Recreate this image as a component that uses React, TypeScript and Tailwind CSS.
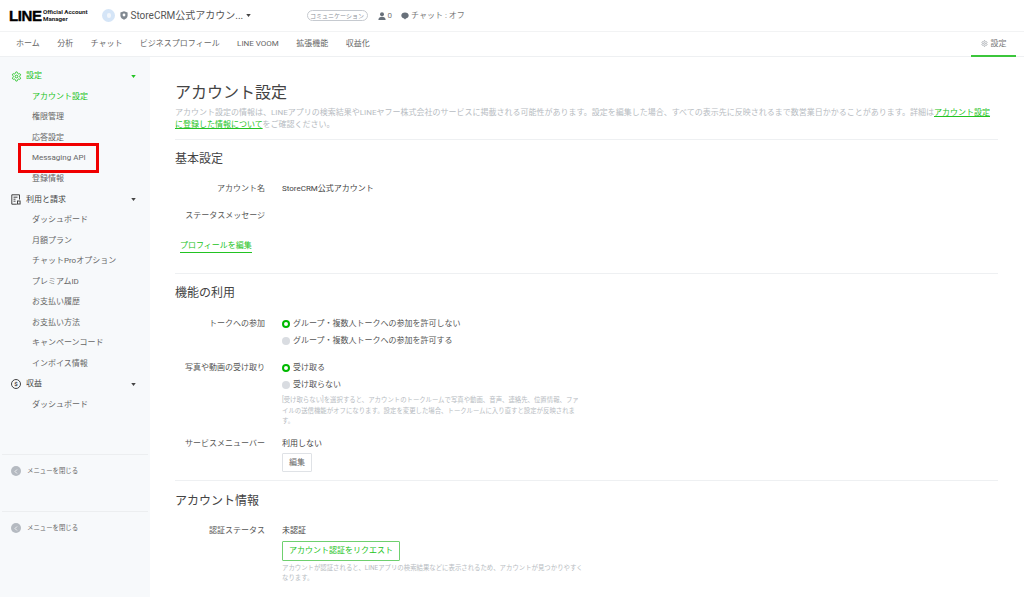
import React from "react";

const FONT = "[font-family:Roboto,'Noto_Sans_CJK_JP',sans-serif]";
const Caret = ({ green = false }: { green?: boolean }) => (
  <svg width="5" height="3" viewBox="0 0 6 4" className={green ? "text-[#22c322]" : "text-[#444]"}>
    <path d="M0 0h6L3 4z" fill="currentColor" />
  </svg>
);

const Gear = ({ className = "", size = 11 }: { className?: string; size?: number }) => (
  <svg width={size} height={size} viewBox="0 0 24 24" fill="none" stroke="currentColor" strokeWidth="2" className={className}>
    <path d="M12.2 2h-.4a2 2 0 0 0-2 2v.2a2 2 0 0 1-1 1.7l-.4.3a2 2 0 0 1-2 0l-.2-.1a2 2 0 0 0-2.7.7l-.2.4a2 2 0 0 0 .7 2.7l.2.1a2 2 0 0 1 1 1.7v.5a2 2 0 0 1-1 1.8l-.2.1a2 2 0 0 0-.7 2.7l.2.4a2 2 0 0 0 2.7.7l.2-.1a2 2 0 0 1 2 0l.4.3a2 2 0 0 1 1 1.7v.2a2 2 0 0 0 2 2h.4a2 2 0 0 0 2-2v-.2a2 2 0 0 1 1-1.7l.4-.3a2 2 0 0 1 2 0l.2.1a2 2 0 0 0 2.7-.7l.2-.4a2 2 0 0 0-.7-2.7l-.2-.1a2 2 0 0 1-1-1.8v-.5a2 2 0 0 1 1-1.7l.2-.1a2 2 0 0 0 .7-2.7l-.2-.4a2 2 0 0 0-2.7-.7l-.2.1a2 2 0 0 1-2 0l-.4-.3a2 2 0 0 1-1-1.7V4a2 2 0 0 0-2-2z" />
    <circle cx="12" cy="12" r="3" />
  </svg>
);

const SideHead = ({ icon, label, green = false }: { icon: React.ReactNode; label: string; green?: boolean }) => (
  <div className={`h-[20.55px] flex items-center pl-[11px] pr-[14px] text-[8px] ${green ? "text-[#22c322]" : "text-[#444]"}`}>
    <span className="w-[15px] flex items-center">{icon}</span>
    <span className="flex-1">{label}</span>
    <Caret green={green} />
  </div>
);

const SideItem = ({ label, active = false }: { label: string; active?: boolean }) => (
  <div className={`h-[20.55px] flex items-center pl-[32px] text-[8px] ${active ? "text-[#22c322]" : "text-[#666]"}`}>{label}</div>
);

const Collapse = () => (
  <div className="border-t border-[#eceef0] h-[57px] mx-[2px] pl-[9px] pt-[10px] flex items-start gap-[6px] text-[6.4px] text-[#666]">
    <span className="w-[10px] h-[10px] rounded-full bg-[#b5bac1] flex items-center justify-center mt-[1px]">
      <svg width="4" height="5" viewBox="0 0 4 5"><path d="M3 .5 1 2.500l2 2" stroke="#fff" strokeWidth="0.8" fill="none" /></svg>
    </span>
    <span className="leading-[12px]">メニューを閉じる</span>
  </div>
);

const Radio = ({ on, label }: { on: boolean; label: string }) => (
  <div className="flex items-center h-[16.5px] text-[8px] text-[#555]">
    <span className={`w-[8px] h-[8px] rounded-full mr-[3px] ${on ? "border-[2px] border-[#00b900] bg-white" : "bg-[#d9dce1]"}`} />
    {label}
  </div>
);

const Row = ({ label, children, className = "" }: { label: string; children?: React.ReactNode; className?: string }) => (
  <div className={`flex text-[8px] ${className}`}>
    <div className="w-[90px] text-right text-[#555] leading-[16px] shrink-0">{label}</div>
    <div className="ml-[17px] flex-1 text-[#444] leading-[16px] min-w-0">{children}</div>
  </div>
);

export default function App() {
  const navs = ["ホーム", "分析", "チャット", "ビジネスプロフィール", "LINE VOOM", "拡張機能", "収益化"];
  return (
    <div className={`w-[1024px] h-[597px] overflow-hidden bg-white flex flex-col relative ${FONT}`}>
      {/* top bar */}
      <header className="h-[32px] shrink-0 flex items-center border-b border-[#f2f3f4] pl-[9px]">
        <span className="text-[15px] leading-none font-bold text-black tracking-[-0.4px] w-[34px] [-webkit-text-stroke:0.4px_black] [font-family:'Liberation_Sans',sans-serif]">LINE</span>
        <span className="text-[6.2px] leading-[7px] font-bold text-[#222] w-[47px]">Official Account<br />Manager</span>
        <span className="ml-[12px] w-[13px] h-[13px] rounded-full bg-[#d5e5f7] flex items-center justify-center">
          <span className="w-[4px] h-[5px] rounded-full bg-[#f2f6fb]" />
        </span>
        <svg width="8" height="9" viewBox="0 0 8 9" className="ml-[5px]"><path d="M4 .3 7.600 1.500v3C7.600 6.700 5.800 8 4 8.800 2.200 8 .4 6.700.4 4.500v-3z" fill="#808890" /><circle cx="4" cy="4" r="1.4" fill="#fff" /></svg>
        <span className="ml-[2.5px] text-[10px] text-[#555] w-[112px] whitespace-nowrap">StoreCRM公式アカウン...</span>
        <span className="ml-[3px]"><Caret /></span>
        <span className="ml-[56px] w-[61px] h-[11px] rounded-full border border-[#c6cad0] flex items-center justify-center text-[6px] text-[#8b9098]">コミュニケーション</span>
        <svg width="8" height="8" viewBox="0 0 8 8" className="ml-[10px]"><circle cx="4" cy="2.200" r="2" fill="#68707a" /><path d="M.4 8c0-2.200 1.500-3.200 3.600-3.200S7.600 5.800 7.600 8z" fill="#68707a" /></svg>
        <span className="ml-[2px] text-[8px] text-[#777]">0</span>
        <svg width="8" height="8" viewBox="0 0 8 8" className="ml-[9px]"><path d="M4 .6C1.900.6.300 1.900.300 3.600c0 1.500 1.200 2.700 2.800 3l.9 1 .9-1c1.600-.3 2.800-1.500 2.800-3C7.700 1.900 6.100.6 4 .6z" fill="#68707a" /></svg>
        <span className="ml-[2px] text-[8px] text-[#777]">チャット : オフ</span>
      </header>
      {/* nav */}
      <nav className="h-[25px] shrink-0 flex items-stretch border-b border-[#eef0f2] pl-[16px] pr-[8px] text-[8px] text-[#666]">
        <div className="flex items-center gap-[17.4px]">
          {navs.map((n) => <span key={n}>{n}</span>)}
        </div>
        <div className="ml-auto w-[45px] border-b-[2px] border-[#3bc63b] flex items-center justify-center gap-[3px] text-[#777] -mb-[1px]">
          <Gear size={7} className="text-[#8b9098]" />
          <span>設定</span>
        </div>
      </nav>
      <div className="flex flex-1 min-h-0">
        {/* sidebar */}
        <aside className="w-[150px] shrink-0 bg-[#f7f9fb] pt-[9px]">
          <SideHead green label="設定" icon={<Gear size={11} />} />
          <SideItem active label="アカウント設定" />
          <SideItem label="権限管理" />
          <SideItem label="応答設定" />
          <SideItem label="Messaging API" />
          <SideItem label="登録情報" />
          <SideHead label="利用と請求" icon={
            <svg width="10" height="11" viewBox="0 0 10 11" fill="none" stroke="currentColor" strokeWidth="1"><path d="M8.500 5.500V.8H.8v9.400h5" /><path d="M2.500 3.200h4M2.500 5.200h2M2.500 7.200h2" /><rect x="6.500" y="7" width="2.600" height="3" /></svg>
          } />
          <SideItem label="ダッシュボード" />
          <SideItem label="月額プラン" />
          <SideItem label="チャットProオプション" />
          <SideItem label="プレミアムID" />
          <SideItem label="お支払い履歴" />
          <SideItem label="お支払い方法" />
          <SideItem label="キャンペーンコード" />
          <SideItem label="インボイス情報" />
          <SideHead label="収益" icon={
            <span className="w-[10px] h-[10px] rounded-full border border-[#444] flex items-center justify-center text-[6px] leading-none font-bold">$</span>
          } />
          <SideItem label="ダッシュボード" />
          <div className="h-[39px]" />
          <Collapse />
          <Collapse />
        </aside>
        {/* main */}
        <main className="flex-1 min-w-0 pl-[25px] pr-[26px] pt-[26px] overflow-hidden">
          <h1 className="text-[16px] leading-[20px] text-[#444]">アカウント設定</h1>
          <div className="mt-[4px] pb-[8px] border-b border-[#eef0f2]">
            <p className="pr-[4px] text-[8px] leading-[12px] text-[#b7bcc2]">
              アカウント設定の情報は、LINEアプリの検索結果やLINEヤフー株式会社のサービスに掲載される可能性があります。設定を編集した場合、すべての表示先に反映されるまで数営業日かかることがあります。詳細は<span className="text-[#22c322] underline">アカウント設定に登録した情報について</span>をご確認ください。
            </p>
          </div>
          <h2 className="mt-[10px] text-[12px] leading-[18px] text-[#444]">基本設定</h2>
          <Row label="アカウント名" className="mt-[13px]">StoreCRM公式アカウント</Row>
          <Row label="ステータスメッセージ" className="mt-[11px]" />
          <div className="mt-[16px] ml-[5px] w-fit text-[8px] leading-[12px] text-[#22c322] border-b border-[#22c322]">プロフィールを編集</div>
          <div className="mt-[20px] border-t border-[#eef0f2]" />
          <h2 className="mt-[10px] text-[12px] leading-[18px] text-[#444]">機能の利用</h2>
          <Row label="トークへの参加" className="mt-[14px]">
            <Radio on label="グループ・複数人トークへの参加を許可しない" />
            <Radio on={false} label="グループ・複数人トークへの参加を許可する" />
          </Row>
          <Row label="写真や動画の受け取り" className="mt-[11px]">
            <Radio on label="受け取る" />
            <Radio on={false} label="受け取らない" />
            <p className="mt-[2px] w-[302px] text-[6.4px] leading-[10.5px] text-[#b7bcc2]">[受け取らない]を選択すると、アカウントのトークルームで写真や動画、音声、連絡先、位置情報、ファイルの送信機能がオフになります。設定を変更した場合、トークルームに入り直すと設定が反映されます。</p>
          </Row>
          <Row label="サービスメニューバー" className="mt-[9.5px]">
            利用しない
            <button className="block mt-[1px] w-[30px] h-[19px] border border-[#dfe2e6] rounded-[1px] text-[8px] text-[#666] bg-white">編集</button>
          </Row>
          <div className="mt-[8px] border-t border-[#eef0f2]" />
          <h2 className="mt-[11px] text-[12px] leading-[18px] text-[#444]">アカウント情報</h2>
          <Row label="認証ステータス" className="mt-[13px]">
            未認証
            <button className="block mt-[2px] w-[118px] h-[20px] border border-[#6fd06f] rounded-[1px] text-[8px] text-[#22c322] bg-white">アカウント認証をリクエスト</button>
            <p className="mt-[2px] w-[302px] text-[6.4px] leading-[10px] text-[#b7bcc2]">アカウントが認証されると、LINEアプリの検索結果などに表示されるため、アカウントが見つかりやすくなります。</p>
          </Row>
          <Row label="プレミアムID" className="mt-[11px]">未設定</Row>
        </main>
      </div>
      {/* annotation */}
      <div className="absolute left-[18px] top-[143px] w-[81px] h-[30px] border-[3px] border-[#f00000]" />
    </div>
  );
}
